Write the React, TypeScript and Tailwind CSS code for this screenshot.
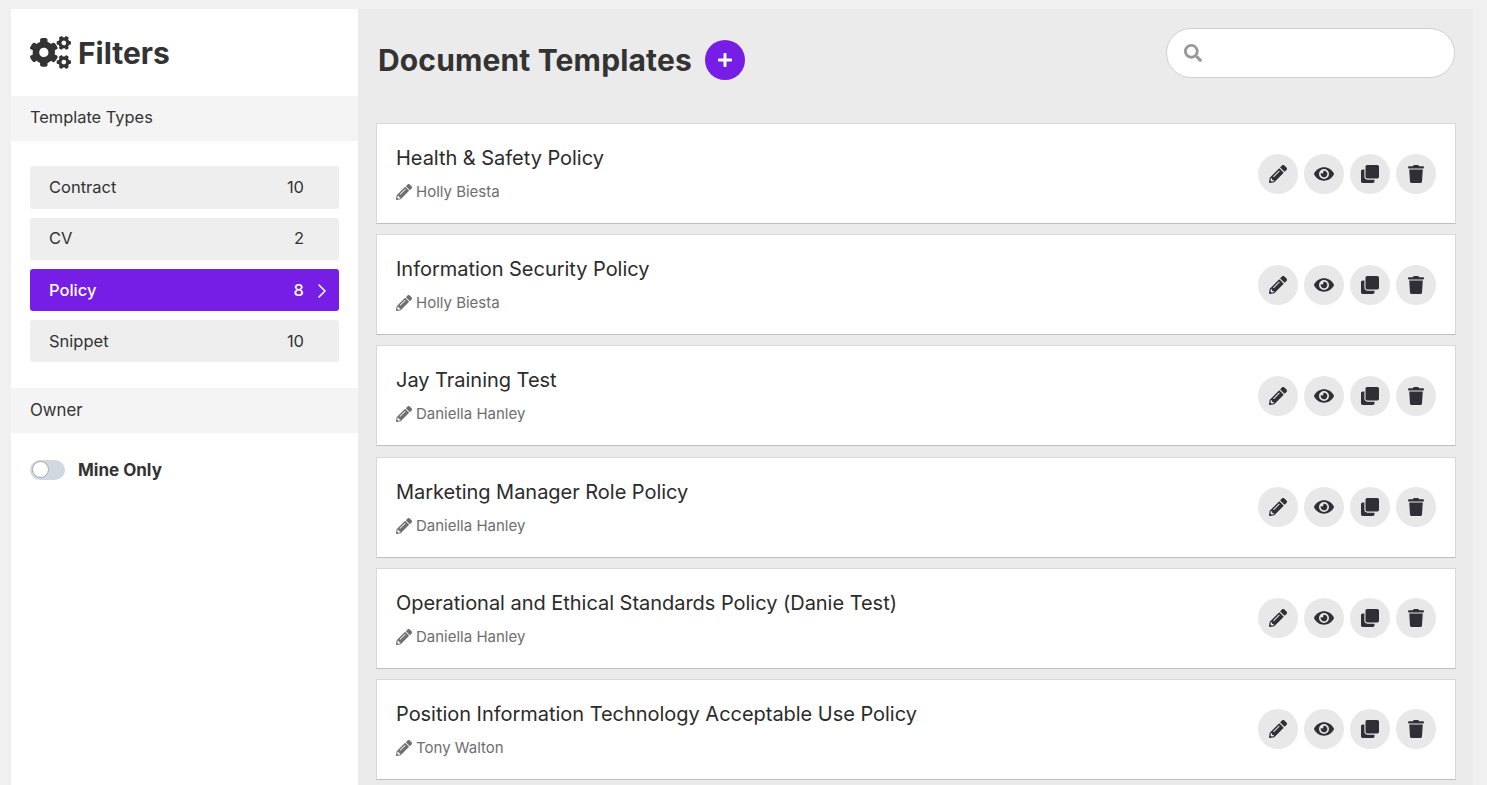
import React from "react";
import { ChevronRight } from "lucide-react";
import { FaCogs, FaPencilAlt, FaEye, FaClone, FaTrash, FaPlus, FaSearch } from "react-icons/fa";

const types = [
  { name: "Contract", count: 10 },
  { name: "CV", count: 2 },
  { name: "Policy", count: 8, active: true },
  { name: "Snippet", count: 10 },
];

const templates = [
  { title: "Health & Safety Policy", owner: "Holly Biesta" },
  { title: "Information Security Policy", owner: "Holly Biesta" },
  { title: "Jay Training Test", owner: "Daniella Hanley" },
  { title: "Marketing Manager Role Policy", owner: "Daniella Hanley" },
  { title: "Operational and Ethical Standards Policy (Danie Test)", owner: "Daniella Hanley" },
  { title: "Position Information Technology Acceptable Use Policy", owner: "Tony Walton" },
];

const actions = [
  { Icon: FaPencilAlt, size: 18 },
  { Icon: FaEye, size: 20 },
  { Icon: FaClone, size: 18 },
  { Icon: FaTrash, size: 18 },
];

const App = () => {
  return (
    <div className="flex h-screen overflow-hidden bg-[#f0f0f0] pt-[9px] pl-[11px] pr-[14px] font-['Inter',sans-serif] text-[#333]">
      <aside className="w-[347px] shrink-0 bg-white">
        <h1 className="flex h-[87px] items-center gap-[7px] pl-[19px] text-[30px] font-bold">
          <FaCogs size={41} />
          <span className="pt-[2px]">Filters</span>
        </h1>
        <h2 className="flex h-[45px] items-center bg-[#f4f4f4] pb-[2px] pl-[19px] text-[16.4px] leading-none">Template Types</h2>
        <ul className="flex flex-col gap-[8.8px] px-[19px] pt-[25.4px] pb-[25.6px]">
          {types.map((item) => (
            <li
              key={item.name}
              className={
                item.active
                  ? "relative flex h-[42.4px] items-center justify-between rounded-[3px] bg-[#761de6] pl-[19px] pr-[35px] text-[16.5px] font-medium text-white"
                  : "relative flex h-[42.4px] items-center justify-between rounded-[3px] bg-[#eeeeee] pl-[19px] pr-[35px] text-[16.5px]"
              }
            >
              {item.name}
              <span>{item.count}</span>
              {item.active && <ChevronRight size={24} strokeWidth={1.6} className="absolute right-[5px] top-[10px]" />}
            </li>
          ))}
        </ul>
        <h2 className="flex h-[45px] items-center bg-[#f4f4f4] pb-[1px] pl-[19px] text-[16.8px] leading-none">Owner</h2>
        <div className="flex items-center gap-[13px] pl-[19px] pt-[25px]">
          <span className="mb-[2px] flex h-5 w-[35px] items-center rounded-full bg-[#d2d8df] pl-[2px]">
            <span className="h-[17px] w-[17px] rounded-full border border-[#a9a9a9] bg-white" />
          </span>
          <span className="text-[17px] font-bold">Mine Only</span>
        </div>
      </aside>
      <main className="flex-1 bg-[#ebebeb] pl-[19px] pr-[18px]">
        <header className="flex h-[114px] items-start justify-between">
          <div className="flex items-center gap-[13px] pt-[31px] pl-px">
            <h1 className="text-[30px] font-bold leading-10 tracking-[0.15px]">Document Templates</h1>
            <button className="flex h-10 w-10 items-center justify-center rounded-full bg-[#761de6] text-white">
              <FaPlus size={16} />
            </button>
          </div>
          <label className="mt-[19px] flex h-[50px] w-[289px] items-center rounded-full border border-[#cfcfcf] bg-white pl-[17px]">
            <FaSearch size={18} className="text-[#999]" />
          </label>
        </header>
        <div className="-mx-px flex flex-col gap-[10.2px]">
          {templates.map((item) => (
            <article
              key={item.title}
              className="flex h-[101px] shrink-0 items-center justify-between border border-[#d8d8d8] border-b-[#bdbdbd] bg-white pl-[19px] pr-[19px]"
            >
              <div className="-mt-[1px]">
                <h3 className="text-[20px] leading-7 tracking-[-0.03px] text-[#2b2b2b]">{item.title}</h3>
                <p className="mt-[10px] flex items-center gap-[4px] text-[15px] leading-5 text-[#6e6e6e]">
                  <FaPencilAlt size={16} />
                  {item.owner}
                </p>
              </div>
              <div className="flex gap-[6px]">
                {actions.map(({ Icon, size }, index) => (
                  <button key={index} className="flex h-10 w-10 items-center justify-center rounded-full bg-[#e8e8e8] text-[#2f2f35]">
                    <Icon size={size} />
                  </button>
                ))}
              </div>
            </article>
          ))}
        </div>
      </main>
    </div>
  );
};

export default App;
